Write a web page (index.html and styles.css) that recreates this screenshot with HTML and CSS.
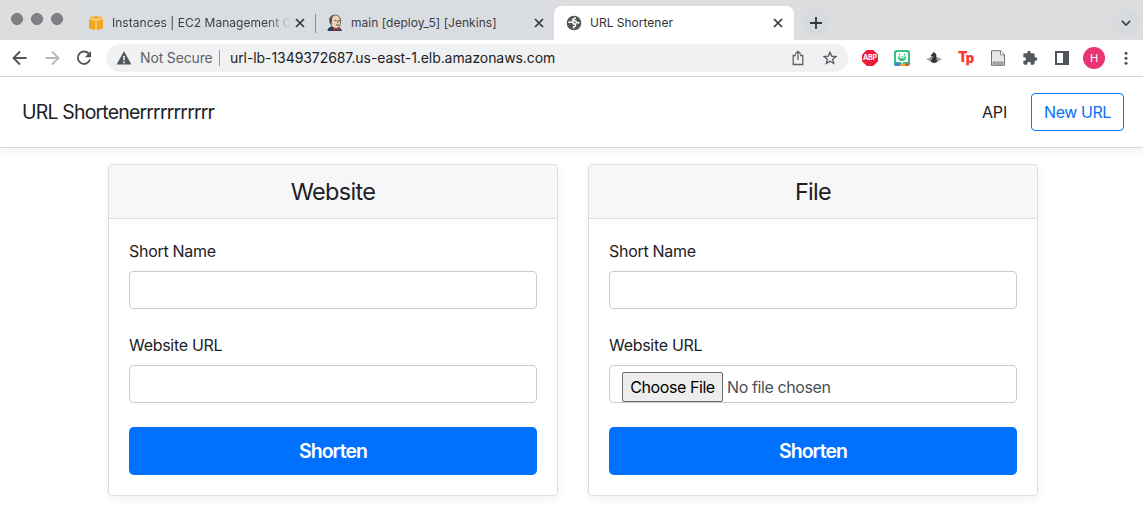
FILE: index.html
```html
<!DOCTYPE html>
<html lang="en">
<head>
<meta charset="utf-8">
<title>URL Shortener</title>
<link rel="stylesheet" href="styles.css">
</head>
<body>
<div class="tabstrip">
  <div class="lights"><i></i><i></i><i></i></div>
  <div class="tab tab-first">
    <svg class="fav" width="16" height="16" viewBox="0 0 16 16"><path d="M1 2.500 8 .8l7 1.700v11L8 15.200l-7-1.700z" fill="#f4a522"/><path d="M1 3.400 8 5l7-1.600M8 5v10" stroke="#fbe3b8" stroke-width="1" fill="none"/><path d="M5.800 1.300v3M10.200 1.300v3" stroke="#fbe3b8" stroke-width=".7" fill="none"/></svg>
    <span class="tab-title fade">Instances | EC2 Management C</span>
    <svg class="close" width="10" height="10" viewBox="0 0 10 10"><path d="m1 1 8 8M9 1 1 9"/></svg>
  </div>
  <div class="tab tab-second">
    <svg class="fav" width="16" height="18" viewBox="0 0 16 18"><path d="M.5 17c0-3 2-4 4-4.500l7 .5c2 .8 3 2 3.500 4z" fill="#24415a"/><path d="M3 7C2 3 5 1 8 1c4 0 6 3 5.500 7 0 4-2 6.500-4.500 6.500S3.500 12 3 7z" fill="#ecd2b4" stroke="#4b4238" stroke-width=".8"/><path d="M3 9.500C1.500 5 3 1.500 7 1 5.500 2.500 5 4 5 6.500L4.500 11z" fill="#57534e"/><path d="M7.500 6.500h2M11.300 6.500h2M9 11h3M10.800 7v2" stroke="#4b4238" stroke-width=".9" fill="none"/><path d="m6.500 13.500 3 1.500 3-1.500V17l-3-1.500-3 1.500z" fill="#d3292f"/></svg>
    <span class="tab-title t2">main [deploy_5] [Jenkins]</span>
    <svg class="close" width="10" height="10" viewBox="0 0 10 10"><path d="m1 1 8 8M9 1 1 9"/></svg>
  </div>
  <div class="tab tab-active">
    <svg class="fav" width="16" height="16" viewBox="0 0 16 16"><circle cx="8" cy="8" r="7.300" fill="#54585d"/><path d="M2.200 7.200h3.600c1.300 0 1.900.8 1.900 1.900h1.800v1.400c0 .9-.8 1.300-1.800 1.300v1.700" stroke="#fff" stroke-width="1.500" fill="none"/><path d="M9.300 2.300c0 1.400-.8 1.900-2.300 1.900v1.500H5.700M7 6h2.300c1 0 1.200.7 1.200 1.700h3" stroke="#fff" stroke-width="1.500" fill="none"/></svg>
    <span class="tab-title">URL Shortener</span>
    <svg class="close" width="10" height="10" viewBox="0 0 10 10"><path d="m1 1 8 8M9 1 1 9"/></svg>
  </div>
  <div class="round plus"><svg width="12" height="12" viewBox="0 0 12 12"><path d="M6 0v12M0 6h12" stroke="#333539" stroke-width="1.800"/></svg></div>
  <div class="round chevron"><svg width="10" height="6" viewBox="0 0 10 6"><path d="m.8.8 4.200 4.200L9.200.8" stroke="#3c4043" stroke-width="1.700" fill="none"/></svg></div>
</div>
<div class="toolbar">
  <svg width="16" height="16" viewBox="0 0 16 16"><path d="M14.500 8H2M8 1.500 1.500 8 8 14.500" stroke="#505459" stroke-width="1.900" fill="none"/></svg>
  <svg width="16" height="16" viewBox="0 0 16 16"><path d="M1.500 8H14M8 1.500 14.500 8 8 14.500" stroke="#b6b8ba" stroke-width="1.900" fill="none"/></svg>
  <svg width="16" height="16" viewBox="0 0 16 16"><path d="M12.600 3.500A6.200 6.200 0 1 0 14 9.500" stroke="#505459" stroke-width="1.900" fill="none"/><path d="M15 1v6.200H8.800z" fill="#505459"/></svg>
  <div class="omnibox">
    <svg width="16" height="14" viewBox="0 0 16 14"><path d="M8 .3 15.500 13.500H.5z" fill="#54585d"/><path d="M8 5v4.200M8 10.500v1.700" stroke="#fff" stroke-width="1.500"/></svg>
    <span class="insecure">Not Secure</span>
    <span class="divider"></span>
    <span class="address">url-lb-1349372687.us-east-1.elb.amazonaws.com</span>
    <svg class="share" width="12" height="16" viewBox="0 0 12 16"><path d="M4 5.500H1.200v9h9.600v-9H8M6 10V1.500M3.300 4 6 1.300 8.700 4" stroke="#5f6368" stroke-width="1.300" fill="none"/></svg>
    <svg width="14" height="14" viewBox="0 0 14 14"><path d="m7 1.200 1.700 3.900 4.200.4-3.200 2.800 1 4.200L7 10.300l-3.700 2.200 1-4.200L1.100 5.500l4.200-.4z" stroke="#54585d" stroke-width="1.300" fill="none"/></svg>
  </div>
  <div class="extensions">
    <div class="abp">ABP</div>
    <svg width="16" height="16" viewBox="0 0 16 16"><rect width="16" height="16" rx="2.500" fill="#35c282"/><path d="M0 13h6l3 3H2.500A2.500 2.500 0 0 1 0 13.500z" fill="#3e86db"/><path d="m6 14.500 5-1 1 2.500H5z" fill="#f3ae31"/><path d="m11 14 5-1v1l-2.500 2H11z" fill="#e54e3a"/><path d="M3.500 2h9A1.500 1.500 0 0 1 14 3.500v7a1.500 1.500 0 0 1-1.500 1.500H9.200L8 14l-1.200-2H3.500A1.500 1.500 0 0 1 2 10.500v-7A1.500 1.500 0 0 1 3.500 2z" fill="#fff"/><path d="M4.500 7h7c0 4.500-7 4.500-7 0zM5.500 3.500v2M10.500 3.500v2" stroke="#35c282" stroke-width="1.200" fill="#35c282"/><path d="M5.500 7.200h5v1h-5z" fill="#fff"/></svg>
    <svg width="16" height="16" viewBox="0 0 16 16"><path d="m0 9 8-3 8 3-8 4.500z" fill="#a0a0a0"/><path d="m4 7.500 8.500 4M3.500 11 12 7.500" stroke="#858585" stroke-width=".8" fill="none"/><path d="M5 11.800c-.2-1.300.8-2 1.200-3.300L7.500 6 5.300 6.700l-.5-1.500L7 3l.7-1.200.8.900c2 .7 2.400 3 1.500 5.600.4 1 1.300 2 1 3.500-1.500 1.200-4.500 1.200-6 0z" fill="#333"/></svg>
    <div class="tp">T<b>p</b></div>
    <svg width="16" height="16" viewBox="0 0 16 16"><path d="M1.500.7h9.300l3.700 3.800v10.800h-13z" fill="#e6e6e6" stroke="#717171"/><path d="M10.500.8v4h4" fill="#fff" stroke="#717171" stroke-width=".8"/><path d="M3 12h10v2.200H3z" fill="#b5b5b5" stroke="#777" stroke-width=".7"/></svg>
    <svg width="16" height="16" viewBox="0 0 24 24"><path d="M20.500 11H19V7a2 2 0 0 0-2-2h-4V3.500a2.500 2.500 0 0 0-5 0V5H4a2 2 0 0 0-2 2v3.800h1.500a2.700 2.700 0 0 1 0 5.400H2V20a2 2 0 0 0 2 2h3.800v-1.500a2.700 2.700 0 0 1 5.400 0V22H17a2 2 0 0 0 2-2v-4h1.500a2.500 2.500 0 0 0 0-5z" fill="#54585d"/></svg>
    <svg width="16" height="16" viewBox="0 0 16 16"><path d="M1 1h14v14H1z" fill="#50555b"/><path d="M3 3h6v10H3z" fill="#fff"/></svg>
    <div class="avatar">H</div>
    <svg class="dots" width="4" height="16" viewBox="0 0 4 16"><circle cx="2" cy="3.200" r="1.500"/><circle cx="2" cy="8.200" r="1.500"/><circle cx="2" cy="13.200" r="1.500"/></svg>
  </div>
</div>
<header class="navbar">
  <h5 class="brand">URL Shortenerrrrrrrrrrr</h5>
  <a class="api">API</a>
  <a class="new-url">New URL</a>
</header>
<main class="deck">
  <section class="card">
    <h4 class="card-header">Website</h4>
    <div class="card-body">
      <label>Short Name</label>
      <div class="field"></div>
      <label>Website URL</label>
      <div class="field"></div>
      <button class="submit">Shorten</button>
    </div>
  </section>
  <section class="card">
    <h4 class="card-header">File</h4>
    <div class="card-body">
      <label>Short Name</label>
      <div class="field"></div>
      <label>Website URL</label>
      <div class="field"><span class="choose">Choose File</span><span class="nofile">No file chosen</span></div>
      <button class="submit">Shorten</button>
    </div>
  </section>
</main>
</body>
</html>
```
FILE: styles.css
```css
* { box-sizing: border-box; }
body { margin: 0; background: #fff; color: #1d2125; font: 16px/24px Inter, "Liberation Sans", sans-serif; height: 520px; overflow: hidden; }
svg { display: block; flex: none; }
h4, h5 { margin: 0; font-weight: 400; }
.tabstrip { display: flex; height: 40px; background: #ddd; padding-left: 11px; }
.lights { display: flex; gap: 8px; padding-top: 13px; width: 67px; }
.lights i { width: 12px; height: 12px; border-radius: 50%; background: #818085; border: 1px solid #737277; }
.tab { display: flex; align-items: center; background: #d9dde2; font-size: 12px; color: #3c3e42; padding-top: 6px; white-space: nowrap; }
.tab-first { width: 237px; padding-left: 10px; border-radius: 10px 0 0 0; }
.tab-second { width: 239px; padding-left: 12px; position: relative; border-radius: 0 0 8px 0; }
.tab-second::before { content: ""; position: absolute; left: 0; top: 14px; width: 1px; height: 19px; background: #898c90; }
.tab-active { width: 240px; height: 34px; margin-top: 6px; padding: 0 0 0 12px; background: #fff; border-radius: 8px 8px 0 0; color: #303236; }
.tab-title { margin-left: 8px; }
.t2 { letter-spacing: .03px; }
.fade { width: 178px; letter-spacing: .03px; -webkit-mask-image: linear-gradient(90deg, #000 155px, transparent 178px); mask-image: linear-gradient(90deg, #000 155px, transparent 178px); }
.close { margin-left: auto; margin-right: 10px; fill: none; stroke: #35373b; stroke-width: 1.7; }
.tab-active .close { margin-right: 11px; }
.round { width: 28px; height: 28px; border-radius: 50%; background: #d7dbe0; display: flex; align-items: center; justify-content: center; margin-top: 9px; }
.plus { margin-left: 8px; }
.chevron { margin-left: auto; margin-right: 3px; }
.toolbar { height: 37px; display: flex; align-items: center; padding-left: 12px; gap: 16px; border-bottom: 1px solid #d6d7d8; }
.omnibox { display: flex; align-items: center; width: 742px; height: 28px; margin-left: -2px; padding: 0 11px 0 10px; border-radius: 14px; background: #f0f1f2; font-size: 14px; }
.insecure { margin-left: 8px; color: #5f6368; width: 73px; letter-spacing: -.15px; white-space: nowrap; }
.divider { width: 1px; height: 16px; margin: 0 10px 0 6px; background: #96999c; }
.address { color: #202124; letter-spacing: -.075px; white-space: nowrap; }
.share { margin-left: auto; margin-right: 19px; }
.extensions { display: flex; align-items: center; gap: 16px; margin-left: -2px; }
.abp { width: 16px; height: 16px; background: #ed1c3a; color: #fff; font: 700 7px/16px Inter, sans-serif; text-align: center; letter-spacing: -.1px; clip-path: polygon(30% 0, 70% 0, 100% 30%, 100% 70%, 70% 100%, 30% 100%, 0 70%, 0 30%); }
.tp { width: 16px; height: 16px; color: #fa3a35; font: 900 14px/14px Inter, sans-serif; letter-spacing: -2px; white-space: nowrap; }
.tp b { font-weight: 900; font-size: 13px; position: relative; top: 1px; }
.avatar { width: 22px; height: 22px; border-radius: 50%; background: #e83470; color: #fff; font-size: 11px; line-height: 22px; text-align: center; margin: 0 -1px 0 -3px; }
.dots { fill: #505459; margin-left: 4px; }
.navbar { display: flex; align-items: center; height: 71px; padding: 0 19px 0 22px; border-bottom: 1px solid #d7d8da; box-shadow: 0 3px 8px rgba(0,0,0,.06); }
.brand { margin-right: auto; font-size: 19.5px; letter-spacing: -.83px; }
.api { margin-right: 24px; letter-spacing: -.2px; }
.new-url { width: 93px; height: 38px; border: 1px solid #007bff; border-radius: 4px; color: #0870f8; line-height: 36px; text-align: center; letter-spacing: -.45px; white-space: nowrap; }
.deck { display: flex; gap: 30px; padding: 16px 0 0 108px; }
.card { width: 450px; height: 332px; border: 1px solid #dcdddd; border-radius: 4px; box-shadow: 0 3px 8px rgba(0,0,0,.06); overflow: hidden; }
.card-header { height: 54px; background: #f7f7f7; border-bottom: 1px solid #dcdddd; font-size: 23.5px; line-height: 53px; text-align: center; letter-spacing: -.72px; }
.card-body { padding: 20px; }
label { display: block; margin-bottom: 8px; letter-spacing: -.29px; }
.field { display: flex; height: 38px; margin-bottom: 24px; border: 1px solid #c8ced5; border-radius: 4px; padding: 6px 12px; white-space: nowrap; }
.choose { width: 101px; height: 30px; border: 1px solid #6b6b6b; border-radius: 2px; background: #ededed; color: #000; text-align: center; line-height: 29px; letter-spacing: -.42px; }
.nofile { margin-left: 4px; line-height: 30px; color: #495057; letter-spacing: -.4px; }
.submit { display: block; width: 100%; height: 48px; border: 0; border-radius: 5px; background: #0070ff; color: #fff; font: 600 19.5px/48px Inter, sans-serif; letter-spacing: -.95px; padding: 0; }
```
